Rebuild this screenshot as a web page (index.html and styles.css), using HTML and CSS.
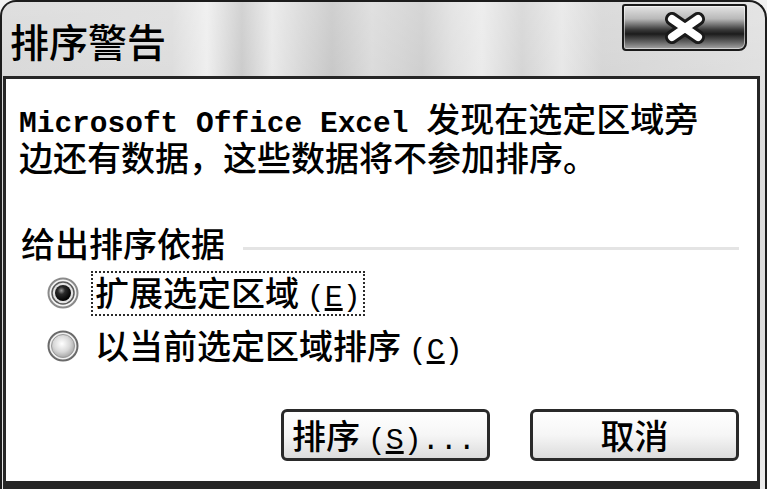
FILE: index.html
```html
<!DOCTYPE html>
<html lang="zh-CN">
<head>
<meta charset="utf-8">
<title>排序警告</title>
<link rel="stylesheet" href="styles.css">
</head>
<body>
<div class="window">
  <div class="titlebar">
    <div class="title">排序警告</div>
    <div class="close">
      <svg width="46" height="32" viewBox="0 0 46 32">
        <path d="M10 7 L36 25 M36 7 L10 25" stroke="#1a1a1a" stroke-width="14" stroke-linecap="round" fill="none"/>
        <path d="M10 7 L36 25 M36 7 L10 25" stroke="#ffffff" stroke-width="8" stroke-linecap="round" fill="none"/>
      </svg>
    </div>
  </div>
  <div class="content">
    <div class="msg"><span class="latin">Microsoft Office Excel </span>发现在选定区域旁<br>边还有数据，这些数据将不参加排序。</div>
    <div class="group">
      <span class="group-label">给出排序依据</span>
      <span class="group-line"></span>
    </div>
    <div class="radios">
      <div class="radio-row">
        <svg class="radio" width="32" height="32" viewBox="0 0 32 32">
          <defs>
            <radialGradient id="dot" cx="40%" cy="35%" r="65%">
              <stop offset="0" stop-color="#9a9a9a"/>
              <stop offset="0.35" stop-color="#2a2a2a"/>
              <stop offset="1" stop-color="#000"/>
            </radialGradient>
          </defs>
          <circle cx="16" cy="16" r="14.5" fill="#f4f4f4" stroke="#8a8a8a" stroke-width="2"/>
          <circle cx="16" cy="16" r="11" fill="#e2e2e2" stroke="#5a5a5a" stroke-width="1.5"/>
          <circle cx="16" cy="16" r="8" fill="url(#dot)"/>
        </svg>
        <span class="radio-text focus">扩展选定区域 <span class="half">(<u>E</u>)</span></span>
      </div>
      <div class="radio-row">
        <svg class="radio" width="32" height="32" viewBox="0 0 32 32">
          <defs>
            <radialGradient id="empty" cx="45%" cy="40%" r="60%">
              <stop offset="0" stop-color="#ffffff"/>
              <stop offset="0.6" stop-color="#d8d8d8"/>
              <stop offset="1" stop-color="#a8a8a8"/>
            </radialGradient>
          </defs>
          <circle cx="16" cy="16" r="14.5" fill="#f0f0f0" stroke="#6a6a6a" stroke-width="2"/>
          <circle cx="16" cy="16" r="11.5" fill="url(#empty)" stroke="#9a9a9a" stroke-width="1"/>
        </svg>
        <span class="radio-text">以当前选定区域排序 <span class="half">(<u>C</u>)</span></span>
      </div>
    </div>
    <div class="buttons">
      <button class="btn btn-left">排序 <span class="half">(<u>S</u>)...</span></button>
      <button class="btn">取消</button>
    </div>
  </div>
</div>
</body>
</html>
```

FILE: styles.css
```css
html, body {
  margin: 0;
  padding: 0;
  background: #f2f2f2;
}

.window {
  width: 767px;
  height: 489px;
  box-sizing: border-box;
  border: 2px solid #1c1c1c;
  border-bottom: none;
  border-radius: 16px 18px 0 0;
  overflow: hidden;
  display: flex;
  flex-direction: column;
  background:
    linear-gradient(180deg, rgba(255,255,255,0.25) 0%, rgba(255,255,255,0) 30%, rgba(255,255,255,0) 70%, rgba(255,255,255,0.45) 100%),
    linear-gradient(90deg,
      #d4d4d4 0px, #d8d8d8 170px, #ececec 205px, #c4c4c4 240px, #e6e6e6 270px,
      #d2d2d2 300px, #c0c0c0 330px, #d6d6d6 370px, #c8c8c8 420px, #dcdcdc 450px,
      #e8e8e8 480px, #cfcfcf 520px, #e4e4e4 560px, #d0d0d0 600px, #dcdcdc 767px);
  font-family: "Noto Sans CJK SC", "Noto Sans", sans-serif;
  font-weight: 500;
  color: #000;
}

.titlebar {
  height: 74px;
  display: flex;
  justify-content: space-between;
  align-items: flex-start;
  flex-shrink: 0;
}

.title {
  font-size: 39px;
  font-weight: 500;
  line-height: 76px;
  padding-left: 8px;
}

.close {
  margin-top: 2px;
  margin-right: 18px;
  width: 125px;
  height: 47px;
  box-sizing: border-box;
  border: 2px solid #1a1a1a;
  border-radius: 3px 3px 8px 4px;
  background: linear-gradient(180deg, #e4e4e4 0%, #b8b8b8 30%, #3a3a3a 55%, #1c1c1c 65%, #5c5c5c 82%, #a6a6a6 100%);
  box-shadow: inset 0 0 0 1px rgba(255,255,255,0.5);
  display: flex;
  align-items: center;
  justify-content: center;
}

.close svg {
  display: block;
}

.content {
  flex: 1;
  margin: 0 5px 0 1px;
  background: #ffffff;
  border: 3px solid #262626;
  border-bottom: 8px solid #262626;
  padding: 22px 18px 0 13px;
  display: flex;
  flex-direction: column;
}

.msg {
  font-size: 34px;
  line-height: 33px;
  white-space: nowrap;
}

.latin {
  font-family: "Liberation Mono", monospace;
  font-weight: 700;
  font-size: 29.5px;
  line-height: 1;
}

.half {
  font-family: "Liberation Mono", monospace;
  font-size: 30px;
  line-height: 1;
}

.group {
  display: flex;
  align-items: center;
  margin-top: 50px;
  height: 40px;
}

.group-label {
  font-size: 34px;
  line-height: 40px;
  margin-left: 2px;
}

.group-line {
  flex: 1;
  height: 3px;
  background: #e4e4e4;
  margin-left: 18px;
  margin-top: 12px;
}

.radios {
  display: flex;
  flex-direction: column;
  gap: 12px;
  margin-top: 10px;
  padding-left: 28px;
}

.radio-row {
  display: flex;
  align-items: center;
  gap: 12px;
  height: 41px;
}

.radio {
  display: block;
  flex-shrink: 0;
}

.radio-text {
  font-size: 34px;
  line-height: 36px;
  padding: 1px 2px;
  border: 2px dotted transparent;
}

.radio-text.focus {
  border-color: #2a2a2a;
}

.buttons {
  display: flex;
  justify-content: flex-end;
  gap: 40px;
  margin-top: 42px;
}

.btn {
  width: 209px;
  height: 52px;
  box-sizing: border-box;
  border: 3px solid #2a2a2a;
  border-radius: 6px;
  background: linear-gradient(180deg, #ffffff 0%, #f6f6f6 50%, #dcdcdc 100%);
  font-family: "Noto Sans CJK SC", "Noto Sans", sans-serif;
  font-weight: 500;
  font-size: 34px;
  line-height: 44px;
  color: #000;
  padding: 0;
  text-align: center;
}

.btn-left {
  text-align: left;
  padding-left: 8px;
}
```
